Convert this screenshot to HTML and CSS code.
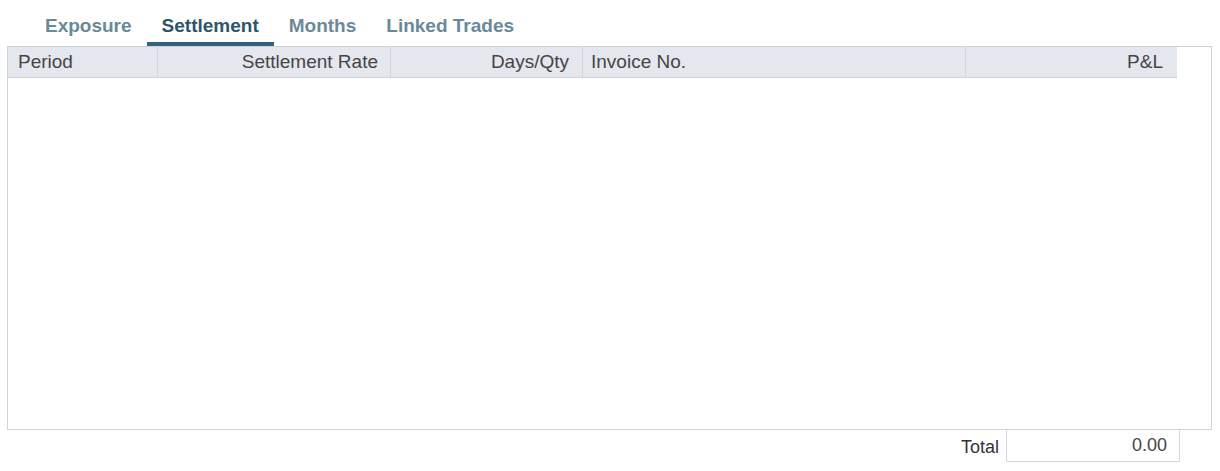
FILE: index.html
```html
<!DOCTYPE html>
<html>
<head>
<meta charset="utf-8">
<link rel="stylesheet" href="styles.css">
</head>
<body>
<div class="tabs">
  <div class="tab">Exposure</div>
  <div class="tab active">Settlement</div>
  <div class="tab">Months</div>
  <div class="tab">Linked Trades</div>
</div>
<div class="grid">
  <div class="head">
    <div class="col c-period">Period</div>
    <div class="col c-rate num">Settlement Rate</div>
    <div class="col c-days num">Days/Qty</div>
    <div class="col c-inv">Invoice No.</div>
    <div class="col c-pl num">P&amp;L</div>
  </div>
</div>
<div class="footer">
  <span class="total-label">Total</span>
  <div class="total-box">0.00</div>
</div>
</body>
</html>
```
FILE: styles.css
```css
html, body {
  margin: 0;
  padding: 0;
  background: #ffffff;
  font-family: "Liberation Sans", Arial, sans-serif;
}
.tabs {
  display: flex;
  padding-left: 30px;
  height: 46px;
}
.tab {
  box-sizing: border-box;
  padding: 15px 15px 0 15px;
  height: 46px;
  line-height: 22px;
  font-size: 19px;
  font-weight: bold;
  color: #6a8998;
  border-bottom: 4px solid transparent;
}
.tab.active {
  color: #2d566b;
  border-bottom-color: #35627a;
}
.grid {
  box-sizing: border-box;
  margin-left: 7px;
  width: 1205px;
  height: 384px;
  border: 1px solid #cdd3db;
}
.head {
  display: flex;
  width: 1169px;
  height: 30px;
  background: #e5e7ef;
  border-bottom: 1px solid #cfd2d8;
}
.col {
  box-sizing: border-box;
  height: 30px;
  line-height: 30px;
  font-size: 19px;
  color: #454545;
  white-space: nowrap;
  border-right: 1px solid #d3d6dd;
  padding: 0 12px;
}
.num { text-align: right; }
.c-period { width: 150px; padding-left: 10px; }
.c-rate { width: 233px; }
.c-days { width: 192px; padding-right: 13px; }
.c-inv { width: 383px; padding-left: 8px; }
.c-pl { width: 211px; border-right: none; padding-right: 14px; }
.footer {
  display: flex;
  justify-content: flex-end;
  align-items: center;
  padding-right: 40px;
  height: 32px;
}
.total-label {
  font-size: 18px;
  color: #333333;
  margin-right: 7px;
  line-height: 32px;
  padding-top: 2px;
}
.total-box {
  box-sizing: border-box;
  width: 174px;
  height: 32px;
  border: 1px solid #d2d7de;
  border-top: none;
  text-align: right;
  padding-right: 12px;
  font-size: 18px;
  line-height: 30px;
  color: #444444;
}
```
